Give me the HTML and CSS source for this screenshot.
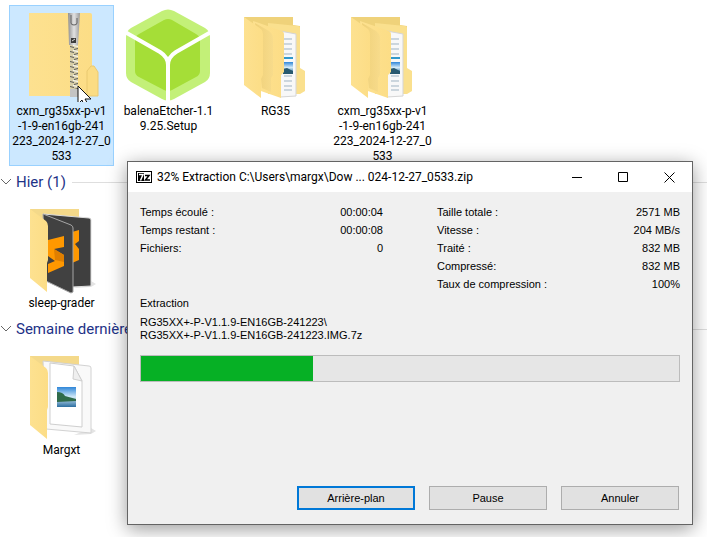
FILE: index.html
```
<!DOCTYPE html>
<html lang="fr">
<head>
    <meta charset="UTF-8">
    <meta name="viewport" content="width=device-width, initial-scale=1.0">
    <link rel="stylesheet" href="styles.css">
    <title>Extraction</title>
</head>
<body>
    <svg class="defs" aria-hidden="true">
        <defs>
            <linearGradient id="fold" x1="0" x2="1" y1="0" y2="0">
                <stop offset="0" stop-color="#fde190"/>
                <stop offset="1" stop-color="#fcdd86"/>
            </linearGradient>
            <linearGradient id="shade" x1="0" x2="1" y1="0" y2="0">
                <stop offset="0" stop-color="#e9c96f"/>
                <stop offset="1" stop-color="#f5da8c"/>
            </linearGradient>
            <linearGradient id="sky" x1="0" x2="0" y1="0" y2="1">
                <stop offset="0" stop-color="#2f86d8"/>
                <stop offset="0.5" stop-color="#d3eaf8"/>
                <stop offset="1" stop-color="#2c6ea0"/>
            </linearGradient>
            <linearGradient id="metal" x1="0" x2="1" y1="0" y2="0">
                <stop offset="0" stop-color="#8e8e8e"/>
                <stop offset="0.5" stop-color="#e2e2e2"/>
                <stop offset="1" stop-color="#9a9a9a"/>
            </linearGradient>
            <pattern id="teeth" width="8" height="5" patternUnits="userSpaceOnUse" x="56" y="39">
                <path d="M0 0h8v5H0z" fill="#d8cfa8"/>
                <path d="M0 1l4 1v1L0 2zM8 3L4 4v1l4-1z" fill="#5a5a5a"/>
                <path d="M3 0l5 1v1L3 1z" fill="#f7f7f7"/>
            </pattern>
            <symbol id="folder-docs" viewBox="0 0 96 96">
                <path d="M16 11h49v8l7 1v40H16z" fill="#efd27a"/>
                <path d="M40 17l30 3q2 0 2 2v40l5 3v20l-5 3H40z" fill="#fae08e"/>
                <path d="M52 25l16 3v62l-16 1z" fill="#f8f8f8" stroke="#d5d5d5"/>
                <path d="M56 33h8M56 38h8M56 43h8M56 48h8M56 70h8M56 75h8M56 80h8M56 84h8" stroke="#9fb3c2"/>
                <path d="M56 52h9" stroke="#3299cc" stroke-width="2"/>
                <path d="M55 56h10v11H55z" fill="url(#sky)"/>
                <path d="M55 63l4-1 6 3v3H55z" fill="#28596f"/>
                <path d="M25 15l29 10q2 1 2 3v38l-3 3v23L30 84z" fill="url(#fold)"/>
                <path d="M27 17l14 8q4 3 4 8v36l-2 3v14l-9-4z" fill="url(#shade)" opacity="0.7"/>
                <path d="M16 11l17 12q2 2 2 5v41l-2 4v19L16 79z" fill="url(#fold)"/>
            </symbol>
        </defs>
    </svg>

    <main class="explorer">
        <ul class="tiles">
            <li class="tile selected">
                <svg class="icon" viewBox="0 0 96 96" aria-hidden="true">
                    <path d="M15 7h61q2 0 2 2v81H15z" fill="url(#fold)"/>
                    <path d="M73 90V65l4-5h3l4 6v24z" fill="#fbdc83" stroke="#eac971"/>
                    <path d="M56 38h8v47h-8z" fill="url(#teeth)"/>
                    <path d="M54 7h12l-2 32h-9z" fill="url(#metal)"/>
                    <path d="M57 9v8q0 2 3 2t3-2v-5" fill="none" stroke="#606060"/>
                    <path d="M57 32h5v5h-5z" fill="#3b3b3b"/>
                    <path d="M58 35l3-2" stroke="#ddd"/>
                    <path d="M56 83h8v8h-8z" fill="#c4c4c4"/>
                    <path d="M64 80v18l4-4 3 8 4-2-4-7h6z" fill="#fff" stroke="#111"/>
                </svg>
                <span class="name">cxm_rg35xx-p-v1<br>-1-9-en16gb-241<br>223_2024-12-27_0<br>533</span>
            </li>
            <li class="tile">
                <svg class="icon" viewBox="0 0 96 96" aria-hidden="true">
                    <path d="M41 5q6-3 12 0l31 17q5 3 5 9v36q0 6-5 9L53 93q-6 3-12 0L10 76q-5-3-5-9V31q0-6 5-9z" fill="#c3f078"/>
                    <path d="M43 14q4-2 8 0l24 14q4 2 4 6v31q0 4-4 6L51 84q-4 2-8 0L18 71q-4-2-4-6V34q0-4 4-6z" fill="#a5de37"/>
                    <path d="M4 26l35 20q8 5 8 13v38M90 26L55 46q-8 5-8 13" fill="none" stroke="#fff" stroke-width="4"/>
                </svg>
                <span class="name">balenaEtcher-1.1<br>9.25.Setup</span>
            </li>
            <li class="tile">
                <svg class="icon" aria-hidden="true"><use href="#folder-docs"/></svg>
                <span class="name">RG35</span>
            </li>
            <li class="tile">
                <svg class="icon" aria-hidden="true"><use href="#folder-docs"/></svg>
                <span class="name">cxm_rg35xx-p-v1<br>-1-9-en16gb-241<br>223_2024-12-27_0<br>533</span>
            </li>
        </ul>

        <button type="button" class="group">
            <svg class="chevron" viewBox="0 0 12 12" aria-hidden="true"><path d="M1 3l5 5 5-5"/></svg>
            Hier (1)
        </button>
        <ul class="tiles">
            <li class="tile">
                <svg class="icon" viewBox="0 0 96 96" aria-hidden="true">
                    <path d="M16 11h49v50H16z" fill="#f4d98a"/>
                    <path d="M60 90l17-1 5-3-5-3z" fill="#e4e4e4"/>
                    <path d="M29 16l46 4q2 0 2 2v66l-19 1z" fill="#3f3f3f" stroke="#dcdcdc"/>
                    <path d="M58 34l7-2v11l-4 3 4 5v11l-7 3z" fill="#ff9800"/>
                    <path d="M29 16l28 11q2 1 2 3v64l-2 1-25-12z" fill="#414141" stroke="#a6a6a6"/>
                    <path d="M34 42l16-4v11l-10 2 10 6v11l-16 7v-9l7-3-7-5z" fill="#ff9800"/>
                    <path d="M40 51l10 6v7l-9-2z" fill="#e07f00"/>
                    <path d="M16 11l16 12q2 2 2 5v34l-1 3v29L16 80z" fill="url(#fold)"/>
                </svg>
                <span class="name">sleep-grader</span>
            </li>
        </ul>

        <button type="button" class="group">
            <svg class="chevron" viewBox="0 0 12 12" aria-hidden="true"><path d="M1 3l5 5 5-5"/></svg>
            Semaine dernière
        </button>
        <ul class="tiles">
            <li class="tile">
                <svg class="icon" viewBox="0 0 96 96" aria-hidden="true">
                    <path d="M16 11h49v50H16z" fill="#f4d98a"/>
                    <path d="M60 90l17-1 5-3-5-3z" fill="#e4e4e4"/>
                    <path d="M29 16l46 5q2 0 2 2v65l-45-4z" fill="#f9f9f9" stroke="#d2d2d2"/>
                    <path d="M36 18l24 3 8 15v46l-32-3z" fill="#fff" stroke="#cfcfcf"/>
                    <path d="M60 21l-1 13 9 2z" fill="#efefef" stroke="#cfcfcf"/>
                    <path d="M43 42h19v20H43z" fill="url(#sky)"/>
                    <path d="M43 47q6 0 8 4l11 3v2l-19 1z" fill="#2f6b4a"/>
                    <path d="M16 11l16 12q2 2 2 5v34l-1 3v29L16 80z" fill="url(#fold)"/>
                </svg>
                <span class="name">Margxt</span>
            </li>
        </ul>
    </main>

    <section class="dialog" role="dialog" aria-labelledby="dialog-title">
        <header class="titlebar">
            <svg class="logo" viewBox="0 0 16 12" aria-hidden="true">
                <path d="M0 0h16v12H0z" fill="#000"/>
                <path d="M1 1h14v10H1z" fill="#fff"/>
                <path d="M2 2h6v8H2z" fill="#000"/>
                <path d="M3 3.500h4L4.500 9.500" fill="none" stroke="#fff" stroke-width="1.500"/>
                <path d="M9 4.500h4L9.500 9H14" fill="none" stroke="#000" stroke-width="1.500"/>
            </svg>
            <h1 class="title" id="dialog-title">32% Extraction C:\Users\margx\Dow ... 024-12-27_0533.zip</h1>
            <button type="button" class="win-btn" aria-label="Réduire">
                <svg viewBox="0 0 11 11"><path d="M0 5.500h10"/></svg>
            </button>
            <button type="button" class="win-btn" aria-label="Agrandir">
                <svg viewBox="0 0 11 11"><path d="M.5.500h9v9h-9z"/></svg>
            </button>
            <button type="button" class="win-btn" aria-label="Fermer">
                <svg viewBox="0 0 11 11"><path d="M.5.500l10 10M10.500.500l-10 10"/></svg>
            </button>
        </header>

        <div class="content">
            <div class="stats">
                <dl class="stat-list">
                    <div class="stat"><dt>Temps écoulé :</dt><dd>00:00:04</dd></div>
                    <div class="stat"><dt>Temps restant :</dt><dd>00:00:08</dd></div>
                    <div class="stat"><dt>Fichiers:</dt><dd>0</dd></div>
                </dl>
                <dl class="stat-list">
                    <div class="stat"><dt>Taille totale :</dt><dd>2571 MB</dd></div>
                    <div class="stat"><dt>Vitesse :</dt><dd>204 MB/s</dd></div>
                    <div class="stat"><dt>Traité :</dt><dd>832 MB</dd></div>
                    <div class="stat"><dt>Compressé:</dt><dd>832 MB</dd></div>
                    <div class="stat"><dt>Taux de compression :</dt><dd>100%</dd></div>
                </dl>
            </div>

            <label class="status" for="progress">Extraction</label>
            <p class="file">RG35XX+-P-V1.1.9-EN16GB-241223\<br>RG35XX+-P-V1.1.9-EN16GB-241223.IMG.7z</p>
            <progress class="progress" id="progress" value="32" max="100"></progress>

            <div class="actions">
                <button type="button" class="btn btn-default">Arrière-plan</button>
                <button type="button" class="btn">Pause</button>
                <button type="button" class="btn">Annuler</button>
            </div>
        </div>
    </section>
</body>
</html>
```
FILE: styles.css
```
* {
    box-sizing: border-box;
}

body {
    margin: 0;
    min-height: 100vh;
    position: relative;
    overflow: hidden;
    background-color: #ffffff;
    color: #000000;
    font-family: Roboto, "Noto Sans", sans-serif;
    font-size: 12px;
}

.defs {
    position: absolute;
    width: 0;
    height: 0;
}

.explorer {
    padding-top: 5px;
}

.tiles {
    display: flex;
    gap: 2px;
    margin: 0;
    padding: 0 0 0 9px;
    list-style: none;
}

.tile {
    width: 105px;
    padding-bottom: 1px;
    border: 1px solid transparent;
    text-align: center;
}

.selected {
    background-color: #cce8ff;
    border-color: #99d1ff;
}

.icon {
    display: block;
    width: 96px;
    height: 96px;
    margin-left: 4px;
}

.name {
    display: block;
    margin-top: 2px;
    line-height: 15px;
    white-space: nowrap;
}

/* group headings */
.group {
    display: flex;
    align-items: center;
    gap: 4px;
    width: 100%;
    height: 26px;
    margin: 3px 0 2px;
    padding: 0;
    border: none;
    background: none;
    color: #1e3287;
    font-family: inherit;
    font-size: 15px;
    text-align: left;
}

.group::after {
    content: "";
    flex: 1;
    height: 1px;
    margin-left: 2px;
    background-color: #dedede;
}

.chevron {
    width: 12px;
    height: 12px;
    fill: none;
    stroke: #666666;
}

/* extraction window */
.dialog {
    position: absolute;
    top: 161px;
    left: 127px;
    right: 14px;
    border: 1px solid #646464;
    background-color: #f0f0f0;
    box-shadow: 0 4px 18px rgba(0, 0, 0, 0.4);
}

.titlebar {
    display: flex;
    align-items: center;
    height: 30px;
    padding-left: 8px;
    background-color: #ffffff;
}

.logo {
    width: 16px;
    height: 12px;
}

.title {
    flex: 1;
    margin: 0 0 0 5px;
    font-size: 12px;
    font-weight: normal;
    white-space: nowrap;
}

.win-btn {
    display: flex;
    align-items: center;
    justify-content: center;
    width: 46px;
    height: 30px;
    padding: 0;
    border: none;
    background: none;
}

.win-btn svg {
    width: 11px;
    height: 11px;
    fill: none;
    stroke: #000000;
}

.content {
    padding: 11px 12px 14px;
    font-family: "Liberation Sans", Arial, sans-serif;
    font-size: 11px;
}

.stats {
    display: grid;
    grid-template-columns: 1fr 1fr;
    gap: 54px;
}

.stat-list {
    margin: 0;
}

.stat {
    display: flex;
    justify-content: space-between;
    line-height: 18px;
}

.stat dd {
    margin: 0;
}

.status {
    display: block;
    margin-top: 1px;
    line-height: 18px;
}

.file {
    margin: 4px 0 13px;
    line-height: 13px;
}

.progress {
    display: block;
    width: 100%;
    height: 27px;
    border: 1px solid #bcbcbc;
    background-color: #e6e6e6;
    appearance: none;
}

.progress::-webkit-progress-bar {
    background-color: #e6e6e6;
}

.progress::-webkit-progress-value {
    background-color: #06b025;
}

.actions {
    display: flex;
    justify-content: flex-end;
    gap: 14px;
    margin-top: 104px;
    padding-right: 1px;
}

.btn {
    width: 118px;
    height: 24px;
    padding: 0;
    border: 1px solid #adadad;
    background-color: #e1e1e1;
    color: #000000;
    font-family: inherit;
    font-size: 11px;
}

.btn-default {
    border: 2px solid #0078d7;
}

.btn:hover {
    background-color: #e5f1fb;
}
```
